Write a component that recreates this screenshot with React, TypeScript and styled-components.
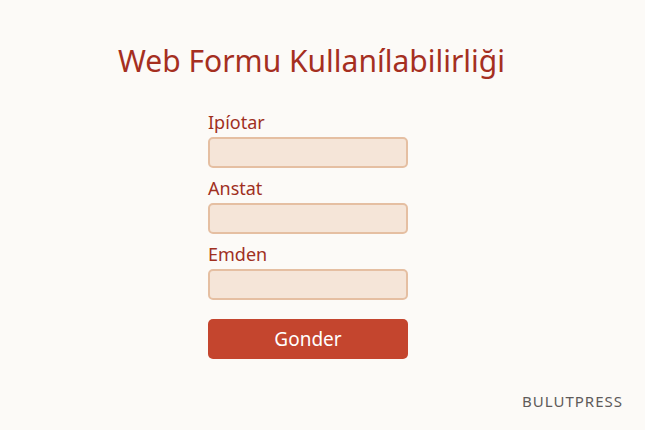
import React from 'react'
import styled, { createGlobalStyle } from 'styled-components'

const GlobalStyle = createGlobalStyle`
  html, body {
    margin: 0;
    padding: 0;
    background: #fcfaf7;
  }
`

const Page = styled.div`
  position: relative;
  width: 645px;
  height: 430px;
  box-sizing: border-box;
  padding-top: 40px;
  background: #fcfaf7;
  font-family: 'Noto Sans', 'Open Sans', sans-serif;
  display: flex;
  flex-direction: column;
`

const Title = styled.h1`
  margin: 0 0 0 118px;
  font-size: 30px;
  font-weight: 400;
  line-height: 42px;
  color: #a52f1f;
`

const Form = styled.form`
  margin: 29px 0 0 208px;
  width: 200px;
  display: flex;
  flex-direction: column;
`

const Field = styled.div`
  display: flex;
  flex-direction: column;
  gap: 3px;
  margin-bottom: 9px;
`

const Label = styled.label`
  font-size: 18px;
  line-height: 23px;
  color: #a0301f;
`

const Input = styled.input`
  box-sizing: border-box;
  width: 200px;
  height: 31px;
  border: 2px solid #e5bfa2;
  border-radius: 5px;
  background: #f5e5d8;
  outline: none;
`

const SubmitButton = styled.button`
  margin-top: 10px;
  height: 40px;
  width: 200px;
  border: none;
  border-radius: 5px;
  background: #c4452e;
  color: #fff;
  font-family: 'Noto Sans', 'Open Sans', sans-serif;
  font-size: 19px;
`

const Brand = styled.div`
  position: absolute;
  right: 22px;
  bottom: 19px;
  font-size: 15px;
  letter-spacing: 1px;
  color: #5f5b5a;
`

const fields = ['Ipíotar', 'Anstat', 'Emden']

const App: React.FC = () => {
  return (
    <>
      <GlobalStyle />
      <Page>
        <Title>Web Formu Kullanílabilirliği</Title>
        <Form onSubmit={(e) => e.preventDefault()}>
          {fields.map((label) => (
            <Field key={label}>
              <Label>{label}</Label>
              <Input type='text' />
            </Field>
          ))}
          <SubmitButton type='submit'>Gonder</SubmitButton>
        </Form>
        <Brand>BULUTPRESS</Brand>
      </Page>
    </>
  )
}

export default App
